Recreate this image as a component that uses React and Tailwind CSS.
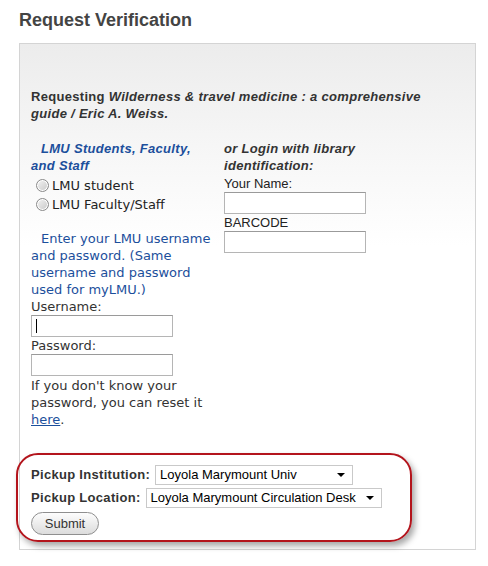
import React from "react";

const body = { fontFamily: '"DejaVu Sans", Verdana, sans-serif' };
const arial = { fontFamily: '"Liberation Sans", Arial, sans-serif' };

const Radio = ({ label }) => (
	<label className="flex items-center gap-[3px] h-[19px] pl-[5px]">
		<span className="w-[13px] h-[13px] rounded-full border border-[#8a8a8a] bg-gradient-to-br from-[#f4f4f4] to-[#c8c8c8] shadow-[inset_0_0_0_1px_#fff]" />
		<span className="text-[13px] text-[#222]">{label}</span>
	</label>
);

const TextInput = ({ caret }) => (
	<div className="w-[142px] h-[22px] bg-white border border-[#b5b5b5] border-t-[#9a9a9a] flex items-center pl-[4px]">
		{caret && <span className="w-px h-[14px] bg-black" />}
	</div>
);

const Select = ({ value, width }) => (
	<div
		className={`${width} h-[20px] bg-white border border-[#c9c9c9] flex items-center justify-between pl-[4px] pr-[7px]`}
		style={arial}
	>
		<span className="text-[13px] text-black whitespace-nowrap">{value}</span>
		<span className="w-0 h-0 border-l-[4px] border-r-[4px] border-t-[4px] border-l-transparent border-r-transparent border-t-black" />
	</div>
);

export default function App() {
	return (
		<div className="w-[488px] h-[566px] bg-white pt-[9px] pl-[19px]" style={body}>
			<h1 className="text-[18px] font-bold text-[#444] leading-[22px]" style={arial}>
				Request Verification
			</h1>

			<div className="mt-[12px] w-[457px] h-[507px] border border-[#d4d4d4] bg-gradient-to-b from-[#ececec] via-[#f6f6f6] via-[20%] to-white to-[40%] pt-[44px] pl-[11px] relative">
				{/* Requested item */}
				<p className="text-[13px] font-bold text-[#333] leading-[17px] w-[420px] tracking-[0.3px]" style={arial}>
					Requesting <i className="pr-[1px]">Wilderness &amp; travel medicine : a comprehensive guide / Eric A. Weiss.</i>
				</p>

				<div className="flex mt-[18px]">
					{/* LMU login */}
					<div className="w-[193px] text-[13px] leading-[17px]">
						<p className="font-bold italic text-[#1c4f9c] indent-[10px] w-[180px] tracking-[0.3px]" style={arial}>
							LMU Students, Faculty, and Staff
						</p>
						<div className="mt-[2px]">
							<Radio label="LMU student" />
							<Radio label="LMU Faculty/Staff" />
						</div>
						<p className="mt-[16px] text-[#1c4f9c] indent-[10px]">
							Enter your LMU username and password. (Same username and password used for myLMU.)
						</p>
						<p className="text-[#333]">Username:</p>
						<TextInput caret />
						<p className="text-[#333]">Password:</p>
						<TextInput />
						<p className="text-[#333] mt-[1px] pr-[4px]">
							If you don't know your password, you can reset it{" "}
							<a href="#" className="text-[#1c4f9c] underline">here</a>.
						</p>
					</div>

					{/* Library id login */}
					<div className="text-[13px] leading-[17px]">
						<p className="font-bold italic text-[#333] w-[150px] tracking-[0.3px]" style={arial}>
							or Login with library identification:
						</p>
						<p className="text-[#222] mt-[1px]" style={arial}>Your Name:</p>
						<TextInput />
						<p className="text-[#222]" style={arial}>BARCODE</p>
						<TextInput />
					</div>
				</div>

				{/* Pickup */}
				<div className="absolute left-[-4px] top-[409px] w-[396px] h-[89px] rounded-[22px] border-2 border-[#b3141c] shadow-[3px_4px_6px_rgba(0,0,0,0.35)] pl-[13px] pt-[9px] text-[13px]">
					<div className="flex items-center gap-[5px] h-[21px]">
						<span className="font-bold text-[#333] tracking-[0.3px]" style={arial}>Pickup Institution:</span>
						<Select value="Loyola Marymount Univ" width="w-[198px]" />
					</div>
					<div className="flex items-center gap-[5px] h-[21px] mt-[2px]">
						<span className="font-bold text-[#333] tracking-[0.3px]" style={arial}>Pickup Location:</span>
						<Select value="Loyola Marymount Circulation Desk" width="w-[236px]" />
					</div>
					<button
						className="mt-[4px] w-[68px] h-[23px] rounded-full border border-[#8f8f8f] bg-gradient-to-b from-[#fdfdfd] to-[#dcdcdc] text-[13px] text-[#333]"
						style={arial}
					>
						Submit
					</button>
				</div>
			</div>
		</div>
	);
}
